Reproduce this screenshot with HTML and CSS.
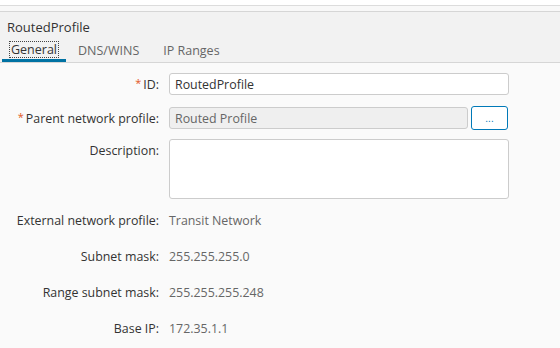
FILE: index.html
```html
<!DOCTYPE html>
<html lang="en">
  <head>
    <meta charset="UTF-8" />
    <title>RoutedProfile</title>
    <link rel="stylesheet" href="styles.css">
  </head>
  <body>
    <div class="topbar"></div>
    <div class="spacer"></div>

    <div class="header">
      <h1 class="title">RoutedProfile</h1>
      <div class="tabs">
        <div class="tab active"><span class="focus">General</span></div>
        <div class="tab">DNS/WINS</div>
        <div class="tab">IP Ranges</div>
      </div>
    </div>

    <div class="form">
      <div class="row">
        <label class="label" for="id"><span class="req">*</span>ID:</label>
        <input class="input" type="text" id="id" value="RoutedProfile" />
      </div>
      <div class="row">
        <label class="label"><span class="req">*</span>Parent network profile:</label>
        <div class="picker">
          <input class="input readonly" type="text" value="Routed Profile" readonly />
          <button class="browse">...</button>
        </div>
      </div>
      <div class="row top">
        <label class="label" for="desc">Description:</label>
        <textarea class="textarea" id="desc"></textarea>
      </div>

      <div class="details">
        <div class="info">
          <span class="label">External network profile:</span>
          <span class="value">Transit Network</span>
        </div>
        <div class="info">
          <span class="label">Subnet mask:</span>
          <span class="value">255.255.255.0</span>
        </div>
        <div class="info">
          <span class="label">Range subnet mask:</span>
          <span class="value">255.255.255.248</span>
        </div>
        <div class="info">
          <span class="label">Base IP:</span>
          <span class="value">172.35.1.1</span>
        </div>
      </div>
    </div>
  </body>
</html>
```

FILE: styles.css
```css
body {
  font-family: "Open Sans", Arial, sans-serif;
  margin: 0;
  padding: 0;
  background-color: #fafafa;
  color: #333;
  font-size: 12px;
}

.topbar {
  height: 5px;
  background-color: #fff;
  border-bottom: 1px solid #dcdcdc;
}

.spacer {
  height: 5px;
  background-color: #f8f8f8;
  border-bottom: 1px solid #d6d6d6;
}

.header {
  background-color: #f2f2f2;
  border-bottom: 1px solid #d6d6d6;
}

.title {
  margin: 0;
  padding: 6px 0 0 7px;
  font-size: 13px;
  font-weight: normal;
  line-height: 18px;
  color: #333;
}

.tabs {
  display: flex;
  padding-left: 2px;
  height: 26px;
}

.tab {
  padding: 6px 12px 0;
  font-size: 12.5px;
  color: #666;
  box-sizing: border-box;
  height: 26px;
}

.tab.active {
  padding: 5px 8px 0 8px;
  color: #333;
  border-bottom: 3px solid #0072a3;
}

.focus {
  display: inline-block;
  outline: 1px dotted #444;
  padding: 0 1px;
  line-height: 15px;
}

.form {
  padding-top: 10px;
  font-size: 12.4px;
}

.row {
  display: flex;
  align-items: center;
  margin-bottom: 11px;
}

.row + .row {
  margin-bottom: 9px;
}

.row.top {
  align-items: flex-start;
  margin-bottom: 0;
}

.label {
  width: 169px;
  text-align: right;
  padding-right: 10px;
  box-sizing: border-box;
  color: #333;
}

.row.top .label {
  padding-top: 3px;
}

.req {
  color: #e2571e;
  font-size: 11px;
  margin-right: 2px;
  position: relative;
  top: -2px;
}

.input {
  width: 340px;
  height: 22px;
  box-sizing: border-box;
  border: 1px solid #ccc;
  border-radius: 3px;
  background-color: #fff;
  font-family: inherit;
  font-size: 12.4px;
  color: #333;
  padding: 0 5px;
}

.picker {
  display: flex;
  align-items: center;
  gap: 3px;
}

.input.readonly {
  width: 299px;
  background-color: #efefef;
  color: #666;
}

.browse {
  width: 37px;
  height: 24px;
  border: 1px solid #0079b8;
  border-radius: 3px;
  background-color: #fff;
  color: #0079b8;
  font-size: 10px;
  padding: 0;
}

.textarea {
  width: 340px;
  height: 60px;
  box-sizing: border-box;
  border: 1px solid #ccc;
  border-radius: 3px;
  background-color: #fff;
  resize: none;
  margin: 0;
  display: block;
}

.details {
  padding-top: 3px;
}

.info {
  display: flex;
  align-items: center;
  height: 36px;
}

.value {
  color: #666;
}
```
